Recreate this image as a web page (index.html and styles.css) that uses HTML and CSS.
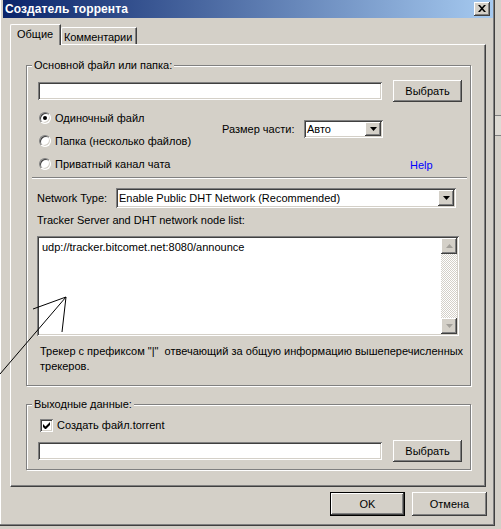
FILE: index.html
```html
<!DOCTYPE html>
<html lang="ru">
<head>
<meta charset="utf-8">
<title>Создатель торрента</title>
<link rel="stylesheet" href="styles.css">
</head>
<body>
<div class="window">
  <div class="titlebar">
    <span class="title">Создатель торрента</span>
    <span class="close"><svg width="8" height="7" viewBox="0 0 8 7"><path d="M0 0h2l2 2.2L6 0h2L5 3.5 8 7H6L4 4.8 2 7H0l3-3.5z" fill="#000"/></svg></span>
  </div>
  <div class="tabs">
    <div class="tab active">Общие</div>
    <div class="tab">Комментарии</div>
  </div>
  <div class="panel">
    <div class="group g1">
      <span class="legend">Основной файл или папка:</span>
      <div class="filerow">
        <div class="input w-file"></div>
        <div class="btn btn-pick">Выбрать</div>
      </div>
      <div class="opts">
        <div class="radios">
          <div class="radio-row"><span class="radio on"></span>Одиночный файл</div>
          <div class="radio-row"><span class="radio"></span>Папка (несколько файлов)</div>
          <div class="radio-row"><span class="radio"></span>Приватный канал чата</div>
        </div>
        <div class="optside">
          <div class="piece">
            <span class="piece-label">Размер части:</span>
            <div class="select sel-piece"><span class="sel-text">Авто</span><span class="sel-btn"><svg width="7" height="4" viewBox="0 0 7 4"><path d="M0 0h7L3.5 4z" fill="#000"/></svg></span></div>
          </div>
          <div class="helprow"><span class="help">Help</span></div>
        </div>
      </div>
      <div class="sep"></div>
      <div class="netrow">
        <span class="net-label">Network Type:</span>
        <div class="select sel-net"><span class="sel-text">Enable Public DHT Network (Recommended)</span><span class="sel-btn"><svg width="7" height="4" viewBox="0 0 7 4"><path d="M0 0h7L3.5 4z" fill="#000"/></svg></span></div>
      </div>
      <div class="lbl">Tracker Server and DHT network node list:</div>
      <div class="textarea">
        <div class="ta-text">udp://tracker.bitcomet.net:8080/announce</div>
        <div class="vscroll">
          <span class="sb-btn"><svg width="7" height="4" viewBox="0 0 7 4"><path d="M0 4h7L3.5 0z" fill="#a3a09a"/></svg></span>
          <span class="sb-track"></span>
          <span class="sb-btn"><svg width="7" height="4" viewBox="0 0 7 4"><path d="M0 0h7L3.5 4z" fill="#a3a09a"/></svg></span>
        </div>
      </div>
      <div class="note">Трекер с префиксом "|"&nbsp; отвечающий за общую информацию вышеперечисленных<br>трекеров.</div>
    </div>
    <div class="group g2">
      <span class="legend">Выходные данные:</span>
      <div class="checkrow"><span class="check"><svg width="7" height="7" viewBox="0 0 7 7"><path d="M0 2v3l2 2h1l4-4V0L2.5 4.5z" fill="#000"/></svg></span>Создать файл.torrent</div>
      <div class="filerow fr2">
        <div class="input w-file"></div>
        <div class="btn btn-pick">Выбрать</div>
      </div>
    </div>
  </div>
  <div class="footer">
    <div class="btn btn-dlg default">OK</div>
    <div class="btn btn-dlg">Отмена</div>
  </div>
</div>
<div class="side"><div class="side-bar"></div></div>
<svg class="annot" width="501" height="529" viewBox="0 0 501 529">
  <path d="M0 374L66 297M33 309L66 297M62 332L66 297" stroke="#000" stroke-width="1" fill="none"/>
</svg>
</body>
</html>
```

FILE: styles.css
```css
* { box-sizing: border-box; }
html, body { margin: 0; padding: 0; }
body {
  width: 501px;
  height: 529px;
  overflow: hidden;
  background: #d4d0c8;
  font-family: "Liberation Sans", Arial, sans-serif;
  font-size: 11px;
  color: #000;
  display: flex;
  align-items: flex-start;
  position: relative;
}
.window {
  width: 495px;
  height: 526px;
  flex: none;
  background: #d4d0c8;
  padding: 0 2px 2px 3px;
  box-shadow: inset -1px -1px #404040, inset -2px -2px #808080, inset 1px 0 #fff;
  display: flex;
  flex-direction: column;
}
.titlebar {
  height: 18px;
  flex: none;
  background: linear-gradient(to right, #0a246a, #a6caf0);
  display: flex;
  align-items: center;
  justify-content: space-between;
  padding: 0 3px 0 2px;
}
.title {
  color: #fff;
  font-weight: bold;
  font-size: 12px;
  letter-spacing: 0.1px;
}
.close {
  width: 16px;
  height: 14px;
  background: #d4d0c8;
  box-shadow: inset -1px -1px #404040, inset 1px 1px #fff, inset -2px -2px #808080;
  display: flex;
  align-items: center;
  justify-content: center;
  padding-bottom: 1px;
}
.tabs {
  display: flex;
  align-items: flex-end;
  height: 20px;
  margin: 6px 0 0 7px;
  position: relative;
  z-index: 1;
}
.tab {
  height: 17px;
  border-top: 1px solid #fff;
  border-left: 1px solid #fff;
  border-right: 1px solid #404040;
  box-shadow: inset -1px 0 #808080;
  border-top-left-radius: 2px;
  display: flex;
  align-items: center;
  background: #d4d0c8;
  white-space: nowrap;
}
.tab.active {
  height: 21px;
  width: 51px;
  margin-bottom: -1px;
  padding: 0 0 3px 6px;
}
.tab:not(.active) {
  width: 76px;
  padding: 1px 0 0 2px;
  letter-spacing: -0.1px;
}
.panel {
  height: 443px;
  width: 476px;
  margin-left: 7px;
  flex: none;
  border-top: 1px solid #fff;
  border-left: 1px solid #fff;
  border-right: 1px solid #404040;
  border-bottom: 1px solid #404040;
  box-shadow: inset -1px -1px #808080;
  padding: 20px 12px 15px 15px;
  display: flex;
  flex-direction: column;
}
.group {
  border: 1px solid #808080;
  box-shadow: inset 1px 1px #fff, 1px 1px #fff;
  display: flex;
  flex-direction: column;
  width: 445px;
}
.g1 { height: 321px; }
.g2 { height: 66px; margin-top: 18px; }
.legend {
  align-self: flex-start;
  margin: -7px 0 0 5px;
  padding: 0 2px;
  line-height: 13px;
  background: #d4d0c8;
}
.filerow {
  display: flex;
  align-items: center;
  height: 22px;
  margin-top: 8px;
  padding-left: 11px;
  gap: 11px;
}
.input {
  height: 18px;
  background: #fff;
  box-shadow: inset 1px 1px #808080, inset -1px -1px #fff, inset 2px 2px #404040, inset -2px -2px #d4d0c8;
}
.w-file { width: 344px; }
.btn {
  background: #d4d0c8;
  box-shadow: inset -1px -1px #404040, inset 1px 1px #fff, inset -2px -2px #808080;
  display: flex;
  align-items: center;
  justify-content: center;
}
.btn-pick { width: 69px; height: 22px; padding-bottom: 1px; }
.opts {
  display: flex;
  margin-top: 4px;
  height: 69px;
}
.radios {
  width: 195px;
  padding-left: 12px;
  display: flex;
  flex-direction: column;
}
.radio-row {
  height: 23px;
  display: flex;
  align-items: center;
  gap: 4px;
}
.radio {
  width: 12px;
  height: 12px;
  border-radius: 50%;
  border: 1px solid;
  border-color: #808080 #fff #fff #808080;
  box-shadow: inset 1px 1px #404040, inset -1px -1px #d4d0c8;
  background: #fff;
  display: flex;
  align-items: center;
  justify-content: center;
  flex: none;
}
.radio.on::after {
  content: "";
  width: 4px;
  height: 4px;
  border-radius: 50%;
  background: #000;
}
.optside {
  flex: 1;
  display: flex;
  flex-direction: column;
}
.piece {
  height: 46px;
  display: flex;
  align-items: center;
}
.piece-label { width: 82px; }
.select {
  background: #fff;
  box-shadow: inset 1px 1px #808080, inset -1px -1px #fff, inset 2px 2px #404040, inset -2px -2px #d4d0c8;
  display: flex;
  align-items: center;
  padding: 2px;
}
.sel-text {
  flex: 1;
  padding-left: 1px;
  white-space: nowrap;
  overflow: hidden;
}
.sel-btn {
  width: 16px;
  align-self: stretch;
  background: #d4d0c8;
  box-shadow: inset -1px -1px #404040, inset 1px 1px #fff, inset -2px -2px #808080;
  display: flex;
  align-items: center;
  justify-content: center;
}
.sel-piece { width: 79px; height: 18px; }
.helprow {
  height: 23px;
  display: flex;
  align-items: center;
  padding: 3px 0 0 188px;
}
.help { color: #0000ff; }
.sep {
  margin: 2px 3px 0 5px;
  height: 2px;
  border-top: 1px solid #808080;
  border-bottom: 1px solid #fff;
}
.netrow {
  display: flex;
  align-items: center;
  height: 20px;
  margin-top: 9px;
  padding-left: 10px;
}
.net-label { width: 79px; }
.sel-net { width: 340px; height: 20px; font-size: 11px; }
.lbl {
  margin-top: 6px;
  line-height: 13px;
  padding-left: 10px;
}
.textarea {
  margin: 9px 0 0 10px;
  width: 422px;
  height: 100px;
  background: #fff;
  box-shadow: inset 1px 1px #808080, inset -1px -1px #fff, inset 2px 2px #404040, inset -2px -2px #d4d0c8;
  padding: 2px;
  display: flex;
}
.ta-text {
  flex: 1;
  padding: 3px 0 0 3px;
  line-height: 13px;
}
.vscroll {
  width: 16px;
  display: flex;
  flex-direction: column;
}
.sb-btn {
  height: 16px;
  flex: none;
  background: #d4d0c8;
  box-shadow: inset -1px -1px #404040, inset 1px 1px #fff, inset -2px -2px #808080;
  display: flex;
  align-items: center;
  justify-content: center;
}
.sb-track {
  flex: 1;
  background-color: #fff;
  background-image: conic-gradient(#d4d0c8 25%, #fff 0 50%, #d4d0c8 0 75%, #fff 0);
  background-size: 2px 2px;
}
.note {
  margin-top: 8px;
  padding-left: 13px;
  line-height: 15px;
}
.checkrow {
  margin-top: 7px;
  height: 14px;
  padding-left: 13px;
  display: flex;
  align-items: center;
  gap: 4px;
}
.check {
  width: 13px;
  height: 13px;
  background: #fff;
  box-shadow: inset 1px 1px #808080, inset -1px -1px #fff, inset 2px 2px #404040, inset -2px -2px #d4d0c8;
  display: flex;
  align-items: center;
  justify-content: center;
  flex: none;
}
.fr2 { margin-top: 8px; }
.footer {
  display: flex;
  justify-content: flex-end;
  gap: 7px;
  margin-top: 5px;
  padding-right: 6px;
}
.btn-dlg { width: 75px; height: 24px; }
.btn-dlg.default {
  box-shadow: inset 1px 1px #000, inset -1px -1px #000, inset -2px -2px #404040, inset 2px 2px #fff, inset -3px -3px #808080;
}
.side {
  flex: 1;
  height: 529px;
}
.side-bar {
  margin-top: 115px;
  height: 21px;
  border-top: 1px solid #808080;
  border-bottom: 1px solid #808080;
  background: #dedbd4;
}
.annot {
  position: absolute;
  left: 0;
  top: 0;
  pointer-events: none;
}
```
